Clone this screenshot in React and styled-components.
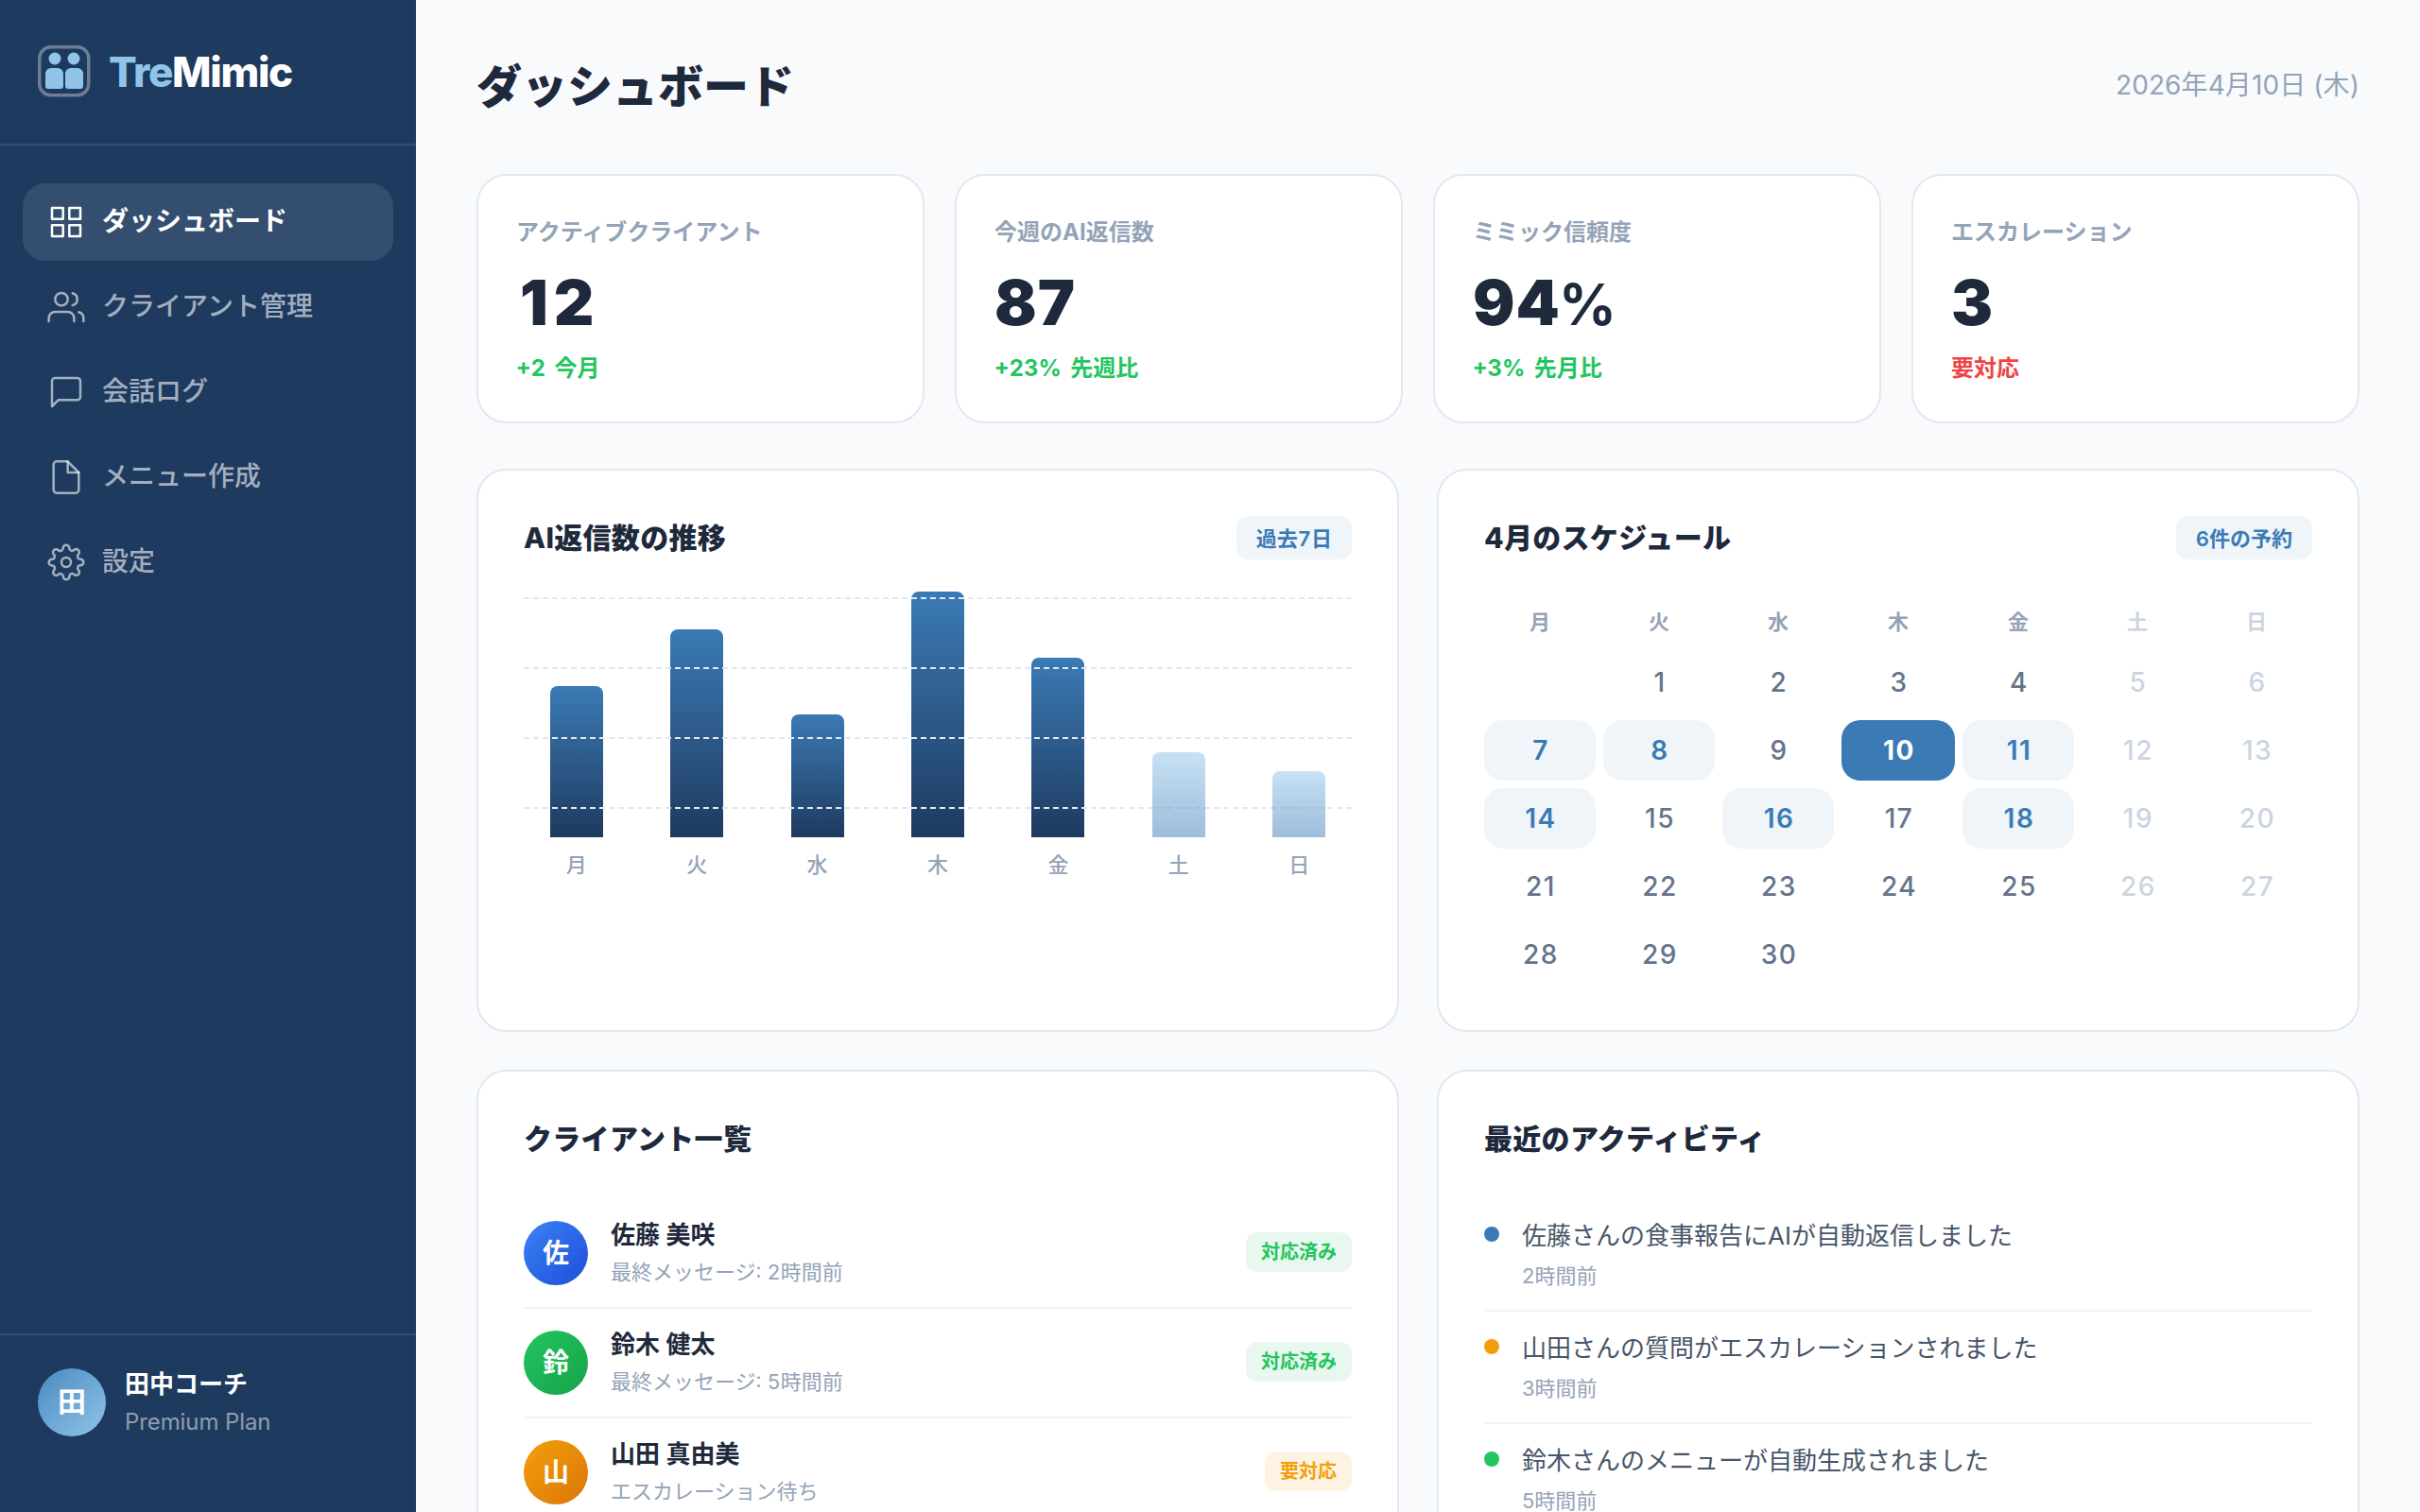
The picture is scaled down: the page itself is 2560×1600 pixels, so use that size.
import React from "react";
import styled, { createGlobalStyle } from "styled-components";
import { FiGrid, FiUsers, FiMessageSquare, FiFile, FiSettings } from "react-icons/fi";

const GlobalStyle = createGlobalStyle`
  html, body {
    margin: 0;
    padding: 0;
    height: 100%;
    overflow: hidden;
    background: #f8fafc;
  }
  * { box-sizing: border-box; }
  body {
    font-family: Inter, "Noto Sans CJK JP", sans-serif;
    color: #1e293b;
  }
`;

const Layout = styled.div`
  display: flex;
  width: 2560px;
  height: 1600px;
  overflow: hidden;
`;

const Sidebar = styled.aside`
  width: 440px;
  flex-shrink: 0;
  height: 100%;
  background: #1e3a5f;
  display: flex;
  flex-direction: column;
`;

const Brand = styled.div`
  height: 154px;
  padding: 0 40px 2px;
  display: flex;
  align-items: center;
  gap: 19px;
  border-bottom: 2px solid rgba(255, 255, 255, 0.1);
`;

const BrandName = styled.div`
  margin-top: 2px;
  font-size: 44px;
  font-weight: 800;
  letter-spacing: -1.3px;
  color: #fff;
  span { color: #90c4e9; }
`;

const Nav = styled.nav`
  padding: 40px 24px;
  display: flex;
  flex-direction: column;
  gap: 8px;
  flex: 1;
`;

const NavItem = styled.div`
  height: 82px;
  padding: 0 26px;
  display: flex;
  align-items: center;
  gap: 18px;
  border-radius: 24px;
  font-size: 28px;
  font-weight: ${(p) => (p.$active ? 700 : 500)};
  color: ${(p) => (p.$active ? "#fff" : "rgba(255,255,255,0.6)")};
  background: ${(p) => (p.$active ? "rgba(255,255,255,0.1)" : "transparent")};
  svg { width: 40px; height: 40px; stroke-width: 1.5; flex-shrink: 0; }
`;

const NavLabel = styled.span`
  margin-bottom: 6px;
`;

const SideFooter = styled.div`
  padding: 31.5px 40px 77.5px;
  display: flex;
  align-items: center;
  gap: 20px;
  border-top: 2px solid rgba(255, 255, 255, 0.1);
`;

const CoachAvatar = styled.div`
  width: 72px;
  height: 72px;
  padding-bottom: 5px;
  border-radius: 50%;
  background: linear-gradient(135deg, #4a8ac0, #90c4e9);
  color: #fff;
  font-size: 30px;
  font-weight: 700;
  display: flex;
  align-items: center;
  justify-content: center;
`;

const CoachInfo = styled.div`
  padding-top: 3px;
`;

const CoachName = styled.div`
  font-size: 26px;
  font-weight: 700;
  color: #fff;
  line-height: 34px;
`;

const CoachPlan = styled.div`
  font-size: 24px;
  letter-spacing: -0.1px;
  color: rgba(255, 255, 255, 0.5);
  line-height: 36px;
  margin-top: 5px;
`;

const Main = styled.main`
  flex: 1;
  padding: 0 64px;
  overflow: hidden;
`;

const TopBar = styled.header`
  height: 184px;
  padding-bottom: 8px;
  display: flex;
  align-items: center;
  justify-content: space-between;
`;

const PageTitle = styled.h1`
  margin: 0;
  font-size: 48px;
  font-weight: 800;
  color: #1e293b;
`;

const DateText = styled.div`
  font-size: 28px;
  letter-spacing: 0.1px;
  color: #94a3b8;
`;

const StatGrid = styled.div`
  display: grid;
  grid-template-columns: repeat(4, 1fr);
  gap: 32px;
  margin-bottom: 48px;
`;

const Card = styled.section`
  background: #fff;
  border: 2px solid #e2e8f0;
  border-radius: 32px;
`;

const StatCard = styled(Card)`
  height: 264px;
  padding: 42px 40px 0;
`;

const StatLabel = styled.div`
  font-size: 24px;
  font-weight: 700;
  line-height: 36px;
  color: #94a3b8;
`;

const StatValue = styled.div`
  height: 84px;
  font-size: 66px;
  font-weight: 900;
  line-height: 84px;
  margin-top: 14px;
  padding-left: ${(p) => (p.$spaced ? 4 : 0)}px;
  letter-spacing: ${(p) => (p.$spaced ? 6 : 1)}px;
  color: #1e293b;
`;

const Percent = styled.span`
  font-size: 60px;
  font-weight: 700;
  line-height: 1;
  letter-spacing: 0;
  margin-left: -2px;
`;

const StatDelta = styled.div`
  font-size: 24px;
  font-weight: 700;
  line-height: 36px;
  margin-top: 10px;
  word-spacing: 3px;
  font-variant-numeric: tabular-nums;
  color: ${(p) => (p.$alert ? "#ef4444" : "#22c55e")};
`;

const TwoCols = styled.div`
  display: grid;
  grid-template-columns: 1fr 1fr;
  gap: 40px;
  margin-bottom: 40px;
`;

const Panel = styled(Card)`
  padding: 48px;
`;

const PanelHead = styled.div`
  height: 46px;
  display: flex;
  align-items: center;
  justify-content: space-between;
  margin-bottom: ${(p) => p.$gap}px;
`;

const PanelTitle = styled.h2`
  margin: 0 0 4px;
  font-size: 30px;
  font-weight: 800;
  letter-spacing: 0.3px;
  color: #1e293b;
`;

const Tag = styled.span`
  height: 46px;
  padding: 0 21px 3px;
  display: flex;
  align-items: center;
  border-radius: 12px;
  font-size: 22px;
  font-weight: 600;
  font-variant-numeric: tabular-nums;
  color: #3b7ab5;
  background: #f0f5fa;
`;

const Chart = styled.div`
  position: relative;
`;

const GridLines = styled.div`
  position: absolute;
  left: 0;
  right: 0;
  top: 6px;
  display: flex;
  flex-direction: column;
  gap: 72px;
  pointer-events: none;
`;

const GridLine = styled.div`
  border-top: 2px dashed #e2e8f0;
`;

const Bars = styled.div`
  display: grid;
  grid-template-columns: repeat(7, 1fr);
  gap: 16px;
`;

const BarCol = styled.div`
  display: flex;
  flex-direction: column;
  align-items: center;
  justify-content: flex-end;
  height: 308px;
`;

const Bar = styled.div`
  width: 56px;
  border-radius: 8px 8px 0 0;
  background: ${(p) =>
    p.$light
      ? "linear-gradient(180deg, #90c4e9, #3b7ab5)"
      : "linear-gradient(180deg, #3b7ab5, #1e3a5f)"};
  opacity: ${(p) => (p.$light ? 0.5 : 1)};
`;

const BarLabel = styled.div`
  font-size: 22px;
  font-weight: 500;
  line-height: 30px;
  margin-top: 14px;
  padding-bottom: 4px;
  color: #94a3b8;
`;

const Calendar = styled.div`
  display: grid;
  grid-template-columns: repeat(3, 118px) 120px repeat(3, 118px);
  grid-template-rows: 48px repeat(5, 64px);
  gap: 8px;
`;

const Weekday = styled.div`
  display: flex;
  align-items: center;
  justify-content: center;
  padding-bottom: 4px;
  font-size: 22px;
  font-weight: 600;
  color: ${(p) => (p.$weekend ? "#cbd5e1" : "#94a3b8")};
`;

const Day = styled.div`
  display: flex;
  align-items: center;
  justify-content: center;
  padding-left: 2px;
  border-radius: 20px;
  font-size: 28px;
  letter-spacing: 1.5px;
  font-weight: ${(p) => (p.$today ? 700 : p.$booked ? 600 : 500)};
  color: ${(p) =>
    p.$today ? "#fff" : p.$booked ? "#3b7ab5" : p.$weekend ? "#cbd5e1" : "#64748b"};
  background: ${(p) => (p.$today ? "#3b7ab5" : p.$booked ? "#f0f5fa" : "transparent")};
`;

const ClientRow = styled.div`
  display: flex;
  align-items: center;
  gap: 24px;
  padding: 21.5px 0;
  border-bottom: 2px solid #f1f5f9;
`;

const ClientAvatar = styled.div`
  width: 68px;
  height: 68px;
  padding-bottom: 5px;
  border-radius: 50%;
  flex-shrink: 0;
  display: flex;
  align-items: center;
  justify-content: center;
  color: #fff;
  font-size: 28px;
  font-weight: 700;
  background: linear-gradient(135deg, ${(p) => p.$from}, ${(p) => p.$to});
`;

const ClientInfo = styled.div`
  flex: 1;
  padding-bottom: 2px;
`;

const ClientName = styled.div`
  font-size: 26px;
  font-weight: 600;
  line-height: 32px;
  color: #1e293b;
`;

const ClientSub = styled.div`
  font-size: 22px;
  line-height: 28px;
  margin-top: 9px;
  font-variant-numeric: tabular-nums;
  color: #94a3b8;
`;

const Status = styled.span`
  height: 42px;
  margin-bottom: 2px;
  padding: 0 16px 3px;
  display: flex;
  align-items: center;
  border-radius: 12px;
  font-size: 20px;
  font-weight: 600;
  color: ${(p) => (p.$warn ? "#f59e0b" : "#22c55e")};
  background: ${(p) => (p.$warn ? "#fef3e2" : "#e8f8ee")};
`;

const ActivityRow = styled.div`
  display: flex;
  gap: 24px;
  padding: 19px 0;
  border-bottom: 2px solid #f1f5f9;
`;

const Dot = styled.span`
  width: 16px;
  height: 16px;
  margin-top: 10px;
  border-radius: 50%;
  flex-shrink: 0;
  background: ${(p) => p.$color};
`;

const ActivityText = styled.div`
  font-size: 26px;
  line-height: 39px;
  color: #475569;
`;

const ActivityTime = styled.div`
  font-size: 22px;
  line-height: 33px;
  margin-top: 7px;
  color: #94a3b8;
`;

const stats = [
  { label: "アクティブクライアント", value: "12", delta: "+2 今月", spaced: true },
  { label: "今週のAI返信数", value: "87", delta: "+23% 先週比" },
  { label: "ミミック信頼度", value: "94", percent: true, delta: "+3% 先月比" },
  { label: "エスカレーション", value: "3", delta: "要対応", alert: true },
];

const navItems = [
  { label: "ダッシュボード", icon: FiGrid, active: true },
  { label: "クライアント管理", icon: FiUsers },
  { label: "会話ログ", icon: FiMessageSquare },
  { label: "メニュー作成", icon: FiFile },
  { label: "設定", icon: FiSettings },
];

const bars = [
  { day: "月", h: 160 },
  { day: "火", h: 220 },
  { day: "水", h: 130 },
  { day: "木", h: 260 },
  { day: "金", h: 190 },
  { day: "土", h: 90, light: true },
  { day: "日", h: 70, light: true },
];

const weekdays = ["月", "火", "水", "木", "金", "土", "日"];
const booked = [7, 8, 11, 14, 16, 18];

const clients = [
  { name: "佐藤 美咲", sub: "最終メッセージ: 2時間前", status: "対応済み", from: "#3b82f6", to: "#1d4ed8" },
  { name: "鈴木 健太", sub: "最終メッセージ: 5時間前", status: "対応済み", from: "#22c55e", to: "#16a34a" },
  { name: "山田 真由美", sub: "エスカレーション待ち", status: "要対応", warn: true, from: "#f59e0b", to: "#d97706" },
];

const activity = [
  { text: "佐藤さんの食事報告にAIが自動返信しました", time: "2時間前", color: "#3b7ab5" },
  { text: "山田さんの質問がエスカレーションされました", time: "3時間前", color: "#f59e0b" },
  { text: "鈴木さんのメニューが自動生成されました", time: "5時間前", color: "#22c55e" },
];

const Logo = () => (
  <svg width="56" height="56" viewBox="0 0 56 56" fill="none">
    <rect x="1.75" y="2.75" width="52" height="51" rx="12" stroke="#fff" strokeOpacity="0.35" strokeWidth="3.5" />
    <circle cx="18" cy="15" r="6.5" fill="#90c4e9" />
    <circle cx="38" cy="15" r="6.5" fill="#90c4e9" />
    <path d="M8 31a6 6 0 0 1 6-6h7a6 6 0 0 1 6 6v13a3 3 0 0 1-3 3H11a3 3 0 0 1-3-3z" fill="#90c4e9" />
    <path d="M29 31a6 6 0 0 1 6-6h7a6 6 0 0 1 6 6v13a3 3 0 0 1-3 3H32a3 3 0 0 1-3-3z" fill="#90c4e9" />
  </svg>
);

const App = () => {
  const days = [<span key="blank" />];
  for (let d = 1; d <= 30; d++) {
    const col = d % 7;
    days.push(
      <Day key={d} $today={d === 10} $booked={booked.includes(d)} $weekend={col >= 5}>
        {d}
      </Day>
    );
  }

  return (
    <Layout>
      <GlobalStyle />
      <Sidebar>
        <Brand>
          <Logo />
          <BrandName><span>Tre</span>Mimic</BrandName>
        </Brand>
        <Nav>
          {navItems.map((item) => (
            <NavItem key={item.label} $active={item.active}>
              <item.icon />
              <NavLabel>{item.label}</NavLabel>
            </NavItem>
          ))}
        </Nav>
        <SideFooter>
          <CoachAvatar>田</CoachAvatar>
          <CoachInfo>
            <CoachName>田中コーチ</CoachName>
            <CoachPlan>Premium Plan</CoachPlan>
          </CoachInfo>
        </SideFooter>
      </Sidebar>

      <Main>
        <TopBar>
          <PageTitle>ダッシュボード</PageTitle>
          <DateText>2026年4月10日 (木)</DateText>
        </TopBar>

        <StatGrid>
          {stats.map((s) => (
            <StatCard key={s.label}>
              <StatLabel>{s.label}</StatLabel>
              <StatValue $spaced={s.spaced}>
                {s.value}
                {s.percent && <Percent>%</Percent>}
              </StatValue>
              <StatDelta $alert={s.alert}>{s.delta}</StatDelta>
            </StatCard>
          ))}
        </StatGrid>

        <TwoCols>
          <Panel>
            <PanelHead $gap={34}>
              <PanelTitle>AI返信数の推移</PanelTitle>
              <Tag>過去7日</Tag>
            </PanelHead>
            <Chart>
              <GridLines>
                <GridLine />
                <GridLine />
                <GridLine />
                <GridLine />
              </GridLines>
              <Bars>
                {bars.map((b) => (
                  <BarCol key={b.day}>
                    <Bar $light={b.light} style={{ height: b.h }} />
                    <BarLabel>{b.day}</BarLabel>
                  </BarCol>
                ))}
              </Bars>
            </Chart>
          </Panel>

          <Panel>
            <PanelHead $gap={42}>
              <PanelTitle>4月のスケジュール</PanelTitle>
              <Tag>6件の予約</Tag>
            </PanelHead>
            <Calendar>
              {weekdays.map((w, i) => (
                <Weekday key={w} $weekend={i >= 5}>{w}</Weekday>
              ))}
              {days}
            </Calendar>
          </Panel>
        </TwoCols>

        <TwoCols>
          <Panel>
            <PanelHead $gap={41}>
              <PanelTitle>クライアント一覧</PanelTitle>
            </PanelHead>
            {clients.map((c) => (
              <ClientRow key={c.name}>
                <ClientAvatar $from={c.from} $to={c.to}>{c.name[0]}</ClientAvatar>
                <ClientInfo>
                  <ClientName>{c.name}</ClientName>
                  <ClientSub>{c.sub}</ClientSub>
                </ClientInfo>
                <Status $warn={c.warn}>{c.status}</Status>
              </ClientRow>
            ))}
          </Panel>

          <Panel>
            <PanelHead $gap={41}>
              <PanelTitle>最近のアクティビティ</PanelTitle>
            </PanelHead>
            {activity.map((a) => (
              <ActivityRow key={a.text}>
                <Dot $color={a.color} />
                <div>
                  <ActivityText>{a.text}</ActivityText>
                  <ActivityTime>{a.time}</ActivityTime>
                </div>
              </ActivityRow>
            ))}
          </Panel>
        </TwoCols>
      </Main>
    </Layout>
  );
};

export default App;
